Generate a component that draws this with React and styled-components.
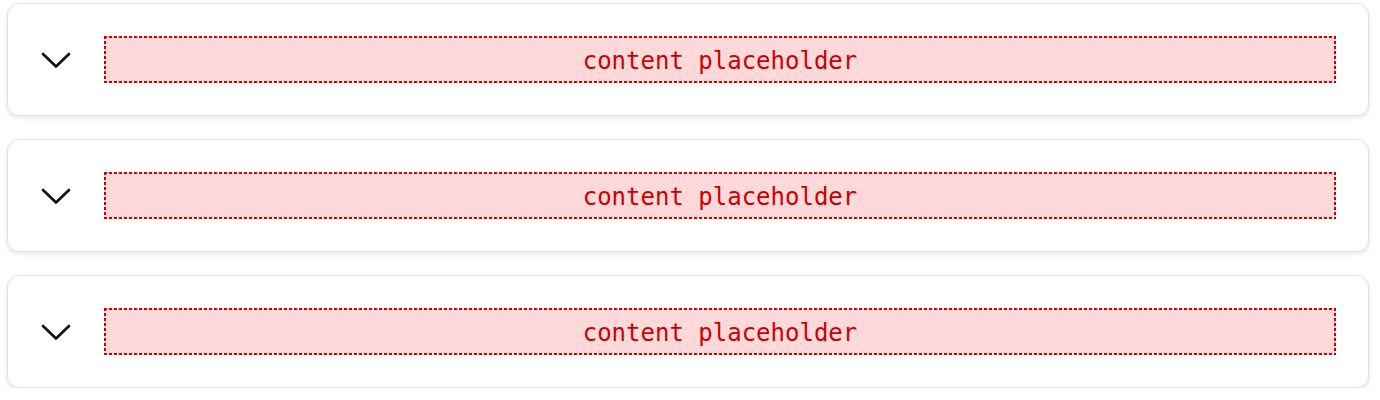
import React from 'react'
import styled, { createGlobalStyle } from 'styled-components'

const GlobalStyle = createGlobalStyle`
  html, body {
    margin: 0;
    padding: 0;
    background: #ffffff;
    font-family: "Liberation Sans", Arial, sans-serif;
  }
`

const Stack = styled.div`
  display: flex;
  flex-direction: column;
  gap: 23px;
  padding: 3px 11px 0 7px;
`

const Card = styled.div`
  display: flex;
  align-items: center;
  gap: 32px;
  padding: 32px;
  background: #fff;
  border: 1px solid #e0e0e0;
  border-radius: 12px;
  box-shadow: 0 2px 5px rgba(0, 0, 0, 0.1);
`

const Toggle = styled.button`
  flex: 0 0 32px;
  width: 32px;
  height: 32px;
  padding: 0;
  border: none;
  background: none;
  display: flex;
  align-items: center;
  justify-content: center;
  cursor: pointer;
`

// dashed red outline: 2px thick, 3px dash / 2px gap
const dashH = 'repeating-linear-gradient(90deg, #cc0000 0 3px, transparent 3px 5px)'
const dashV = 'repeating-linear-gradient(180deg, #cc0000 0 3px, transparent 3px 5px)'

const Placeholder = styled.div`
  flex: 1;
  height: 47px;
  box-sizing: border-box;
  padding-top: 3px;
  display: flex;
  align-items: center;
  justify-content: center;
  background:
    ${dashH} left top / 100% 2px no-repeat,
    ${dashH} left bottom / 100% 2px no-repeat,
    ${dashV} left top / 2px 100% no-repeat,
    ${dashV} right top / 2px 100% no-repeat,
    #ffd9d9;
  color: #cc0000;
  font-family: "DejaVu Sans Mono", "Liberation Mono", monospace;
  font-size: 24px;
`

function Chevron() {
  return (
    <svg width="32" height="32" viewBox="0 0 32 32" fill="none">
      <polyline
        points="3,10 16,22.5 29,10"
        stroke="#111"
        strokeWidth="2.7"
        strokeLinecap="round"
        strokeLinejoin="round"
      />
    </svg>
  )
}

export default function App() {
  const rows = [1, 2, 3]
  return (
    <>
      <GlobalStyle />
      <Stack>
        {rows.map((r) => (
          <Card key={r}>
            <Toggle aria-label="Expand">
              <Chevron />
            </Toggle>
            <Placeholder>content placeholder</Placeholder>
          </Card>
        ))}
      </Stack>
    </>
  )
}
